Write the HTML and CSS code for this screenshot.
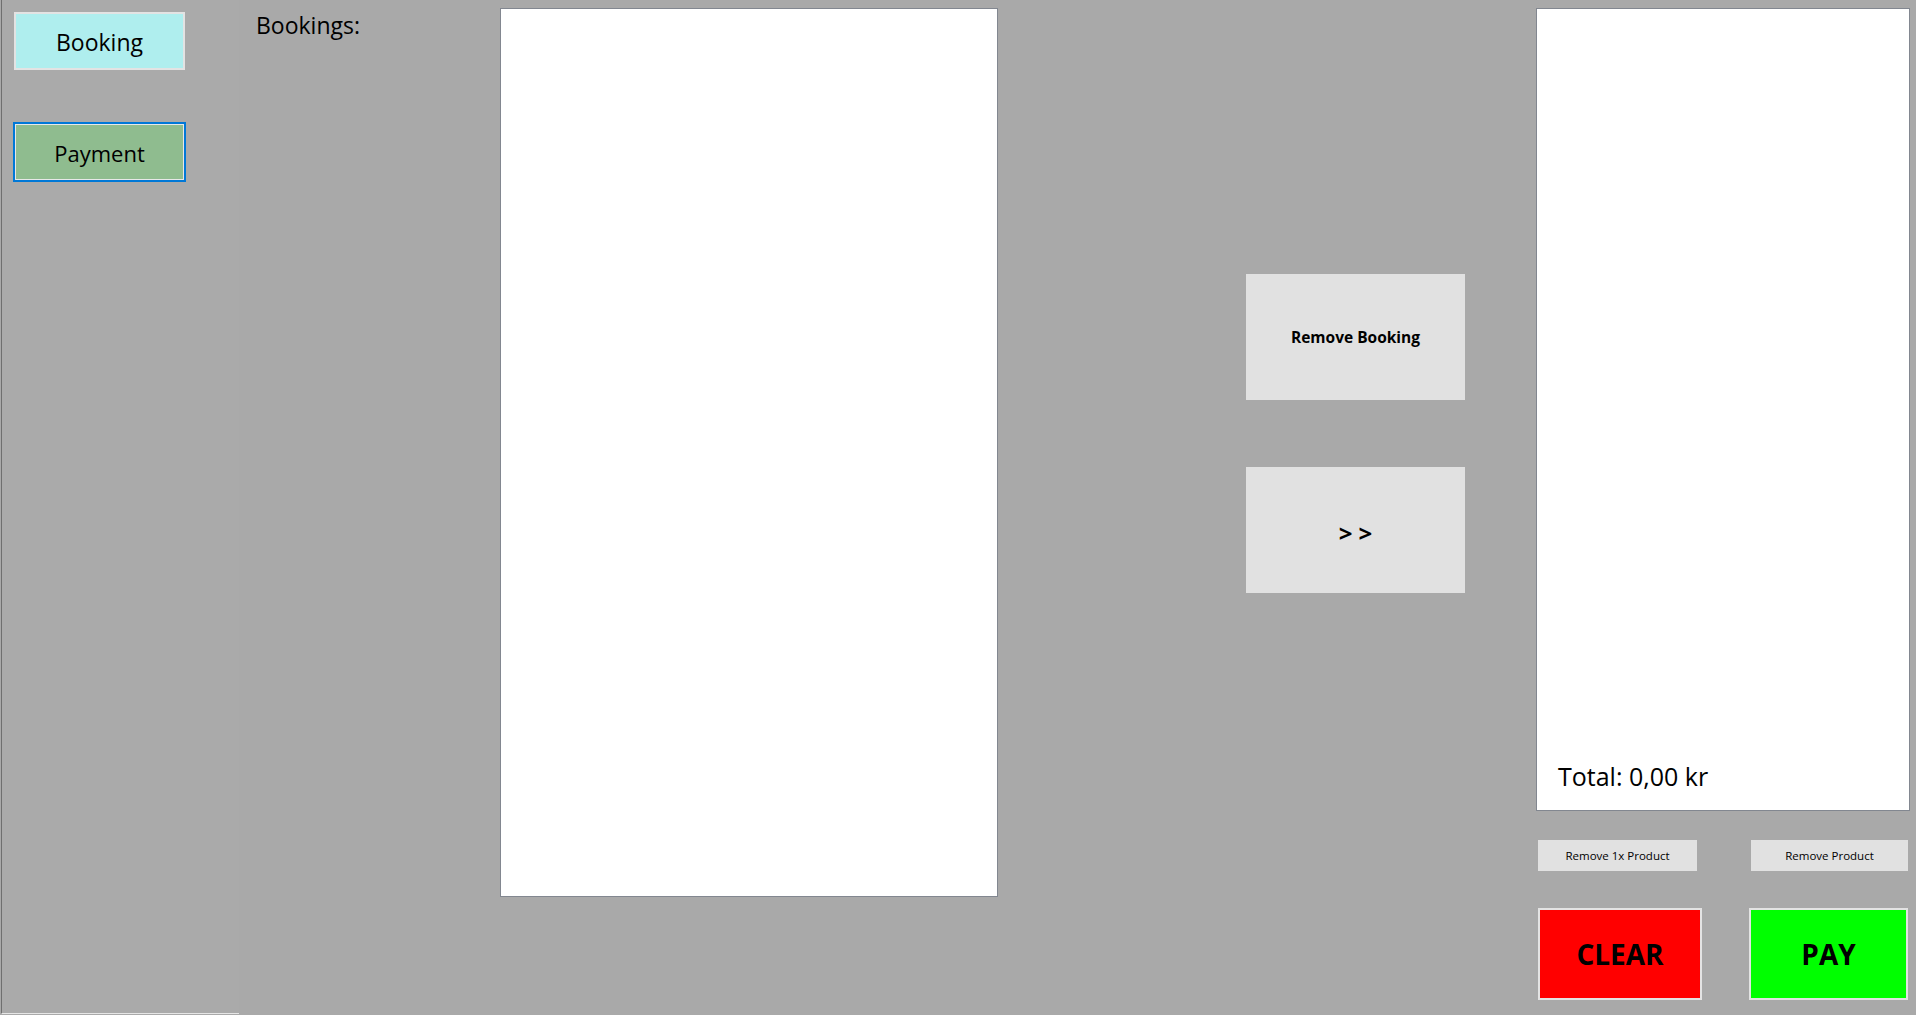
FILE: index.html
```html
<!DOCTYPE html>
<html lang="en">
<head>
<meta charset="utf-8">
<title>Payment</title>
<link rel="stylesheet" href="styles.css">
</head>
<body>
<div class="window">
  <nav class="sidebar">
    <button class="nav-btn nav-booking">Booking</button>
    <button class="nav-btn nav-payment">Payment</button>
  </nav>
  <main class="content">
    <div class="label-col">
      <span class="label">Bookings:</span>
    </div>
    <div class="listbox bookings-list"></div>
    <div class="action-col">
      <button class="action-btn remove-booking">Remove Booking</button>
      <button class="action-btn move-btn">&gt; &gt;</button>
    </div>
    <div class="cart-col">
      <div class="listbox cart-list">
        <span class="total">Total: 0,00 kr</span>
      </div>
      <div class="small-row">
        <button class="small-btn remove-one">Remove 1x Product</button>
        <button class="small-btn remove-all">Remove Product</button>
      </div>
      <div class="big-row">
        <button class="big-btn clear-btn">CLEAR</button>
        <button class="big-btn pay-btn">PAY</button>
      </div>
    </div>
  </main>
</div>
</body>
</html>
```

FILE: styles.css
```css
* {
  box-sizing: border-box;
}

html, body {
  margin: 0;
  padding: 0;
  background: #a9a9a9;
  overflow: hidden;
}

body {
  font-family: "Segoe UI", "Open Sans", "Noto Sans", sans-serif;
  color: #000;
}

button {
  font-family: inherit;
  color: #000;
  padding: 0;
  margin: 0;
  cursor: default;
}

.window {
  display: flex;
  width: 1916px;
  height: 1015px;
}

.sidebar {
  margin-left: 1px;
  width: 238px;
  height: 1014px;
  flex: none;
  border-left: 1px solid #6f6f6f;
  border-bottom: 1px solid #e6e6e6;
  background: #aaaaaa;
  display: flex;
  flex-direction: column;
  align-items: flex-start;
  padding-left: 12px;
  padding-top: 12px;
}

.nav-btn {
  font-size: 23px;
  display: flex;
  align-items: center;
  justify-content: center;
}

.nav-booking {
  width: 171px;
  height: 58px;
  background: #afeeee;
  border: 2px solid #e3e3e3;
  padding-top: 2px;
}

.nav-payment {
  margin-top: 52px;
  margin-left: -1px;
  width: 173px;
  height: 60px;
  background: #8fbc8f;
  border: 2px solid #0078d7;
  box-shadow: inset 0 0 0 1px #e8e8e8;
  font-size: 22px;
  padding-top: 2px;
}

.content {
  flex: 1;
  display: flex;
  align-items: flex-start;
  padding-top: 8px;
}

.label-col {
  margin-left: 17px;
  width: 244px;
  flex: none;
}

.label {
  display: block;
  font-size: 23px;
  line-height: 30px;
  margin-top: 2px;
}

.listbox {
  background: #fff;
  border: 1px solid #828790;
}

.bookings-list {
  width: 498px;
  height: 889px;
  flex: none;
}

.action-col {
  margin-left: 248px;
  width: 219px;
  flex: none;
  padding-top: 266px;
  display: flex;
  flex-direction: column;
  gap: 67px;
}

.action-btn {
  width: 219px;
  height: 126px;
  background: #e1e1e1;
  border: 1px solid #e1e1e1;
  font-weight: 700;
}

.remove-booking {
  font-size: 15.5px;
}

.move-btn {
  font-size: 24px;
  padding-top: 4px;
}

.cart-col {
  margin-left: 71px;
  width: 374px;
  flex: none;
  display: flex;
  flex-direction: column;
}

.cart-list {
  height: 803px;
  display: flex;
  flex-direction: column;
  justify-content: flex-end;
  padding: 0 0 18px 21px;
}

.total {
  font-size: 25px;
  line-height: 32px;
}

.small-row {
  margin-top: 29px;
  display: flex;
  padding-left: 2px;
}

.small-btn {
  height: 31px;
  background: #e1e1e1;
  border: 1px solid #e1e1e1;
  font-size: 11.5px;
}

.remove-one {
  width: 159px;
}

.remove-all {
  margin-left: 54px;
  width: 157px;
}

.big-row {
  margin-top: 37px;
  display: flex;
  padding-left: 2px;
}

.big-btn {
  height: 92px;
  border: 2px solid #e3e3e3;
  font-size: 28px;
  font-weight: 700;
}

.clear-btn {
  width: 164px;
  background: #ff0000;
}

.pay-btn {
  margin-left: 47px;
  width: 159px;
  background: #00ff00;
}
```
